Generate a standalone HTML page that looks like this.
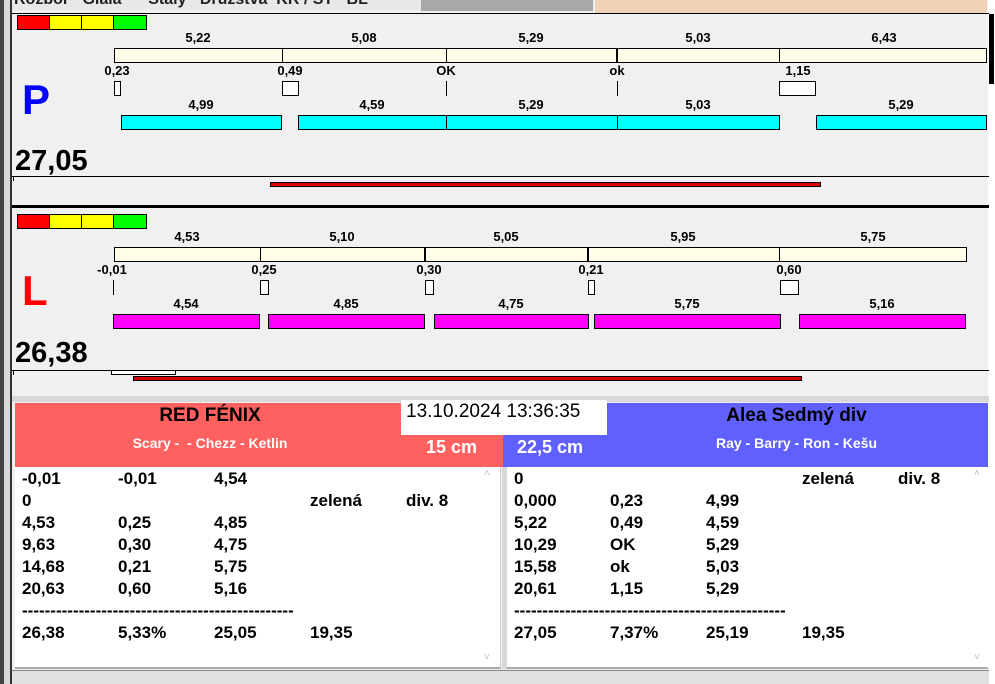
<!DOCTYPE html>
<html><head><meta charset="utf-8"><style>
*{margin:0;padding:0;box-sizing:border-box}
body{width:995px;height:684px;overflow:hidden;background:#f0f0f0;font-family:"Liberation Sans",Arial,sans-serif;position:relative}
.a{position:absolute}
.t{position:absolute;font-weight:bold;font-size:13px;color:#000;white-space:nowrap;transform:translateX(-50%)}
.bx{position:absolute;border:1px solid #000}
.r{position:absolute;font-size:17px;font-weight:bold;white-space:nowrap}
</style></head><body>
<div class="a" style="left:0;top:0;width:4px;height:684px;background:#444"></div>
<div class="a" style="left:4px;top:0;width:6px;height:684px;background:#d8d8d8"></div>
<div class="a" style="left:10px;top:0;width:2px;height:684px;background:#333"></div>
<!-- tabs -->
<div class="a" style="left:12px;top:0;width:410px;height:10px;background:#e8e8e8"></div>
<div class="a" style="left:14px;top:-9px;font-size:16px;font-weight:bold;color:#222">Rozbor&nbsp;&nbsp;&nbsp;Glaia&nbsp;&nbsp;&nbsp;&nbsp;&nbsp;&nbsp;Stály&nbsp;&nbsp;&nbsp;Družstva&nbsp;&nbsp;KR / ST&nbsp;&nbsp;&nbsp;BL</div>
<div class="a" style="left:421px;top:0;width:172px;height:11px;background:#a8a8a8"></div>
<div class="a" style="left:595px;top:0;width:392px;height:13px;background:#efd3b8"></div>
<div class="a" style="left:988px;top:0;width:7px;height:684px;background:#fff"></div>
<div class="a" style="left:989px;top:14px;width:5px;height:70px;background:#000"></div>

<!-- P panel -->
<div class="a" style="left:12px;top:13px;width:977px;height:1px;background:#000"></div>
<div class="bx" style="left:17px;top:15px;width:33px;height:15px;background:#f00"></div>
<div class="bx" style="left:49px;top:15px;width:33px;height:15px;background:#ff0"></div>
<div class="bx" style="left:81px;top:15px;width:33px;height:15px;background:#ff0"></div>
<div class="bx" style="left:113px;top:15px;width:34px;height:15px;background:#0f0"></div>

<div class="bx" style="left:114px;top:48px;width:873px;height:15px;background:#fffde8"></div>
<div class="a" style="left:282px;top:48px;width:1px;height:15px;background:#000"></div>
<div class="a" style="left:446px;top:48px;width:1px;height:15px;background:#000"></div>
<div class="a" style="left:616px;top:48px;width:2px;height:15px;background:#000"></div>
<div class="a" style="left:779px;top:48px;width:1px;height:15px;background:#000"></div>
<div class="t" style="left:198px;top:30px">5,22</div>
<div class="t" style="left:364px;top:30px">5,08</div>
<div class="t" style="left:531px;top:30px">5,29</div>
<div class="t" style="left:698px;top:30px">5,03</div>
<div class="t" style="left:884px;top:30px">6,43</div>
<div class="t" style="left:117px;top:63px">0,23</div>
<div class="t" style="left:290px;top:63px">0,49</div>
<div class="t" style="left:446px;top:63px">OK</div>
<div class="t" style="left:617px;top:63px">ok</div>
<div class="t" style="left:798px;top:63px">1,15</div>
<div class="bx" style="left:114px;top:81px;width:7px;height:15px;background:#fff"></div>
<div class="bx" style="left:282px;top:81px;width:17px;height:15px;background:#fff"></div>
<div class="a" style="left:446px;top:81px;width:1px;height:15px;background:#000"></div>
<div class="a" style="left:617px;top:81px;width:1px;height:15px;background:#000"></div>
<div class="bx" style="left:779px;top:81px;width:37px;height:15px;background:#fff"></div>
<div class="t" style="left:201px;top:97px">4,99</div>
<div class="t" style="left:372px;top:97px">4,59</div>
<div class="t" style="left:531px;top:97px">5,29</div>
<div class="t" style="left:698px;top:97px">5,03</div>
<div class="t" style="left:901px;top:97px">5,29</div>
<div class="bx" style="left:121px;top:115px;width:161px;height:15px;background:#0ff"></div>
<div class="bx" style="left:298px;top:115px;width:149px;height:15px;background:#0ff"></div>
<div class="bx" style="left:446px;top:115px;width:172px;height:15px;background:#0ff"></div>
<div class="bx" style="left:617px;top:115px;width:163px;height:15px;background:#0ff"></div>
<div class="bx" style="left:816px;top:115px;width:171px;height:15px;background:#0ff"></div>
<div class="a" style="left:22px;top:76px;font-size:42px;font-weight:bold;color:#0000ff">P</div>
<div class="a" style="left:15px;top:145px;font-size:29px;font-weight:bold">27,05</div>
<div class="a" style="left:12px;top:176px;width:977px;height:1px;background:#000"></div>
<div class="a" style="left:13px;top:176px;width:1px;height:5px;background:#000"></div>
<div class="bx" style="left:270px;top:182px;width:551px;height:5px;background:#d00"></div>
<div class="a" style="left:12px;top:205px;width:977px;height:3px;background:#000"></div>

<!-- L panel -->
<div class="bx" style="left:17px;top:214px;width:33px;height:15px;background:#f00"></div>
<div class="bx" style="left:49px;top:214px;width:33px;height:15px;background:#ff0"></div>
<div class="bx" style="left:81px;top:214px;width:33px;height:15px;background:#ff0"></div>
<div class="bx" style="left:113px;top:214px;width:34px;height:15px;background:#0f0"></div>
<div class="bx" style="left:114px;top:247px;width:853px;height:15px;background:#fffde8"></div>
<div class="a" style="left:260px;top:247px;width:1px;height:15px;background:#000"></div>
<div class="a" style="left:424px;top:247px;width:2px;height:15px;background:#000"></div>
<div class="a" style="left:587px;top:247px;width:2px;height:15px;background:#000"></div>
<div class="a" style="left:779px;top:247px;width:1px;height:15px;background:#000"></div>
<div class="t" style="left:187px;top:229px">4,53</div>
<div class="t" style="left:342px;top:229px">5,10</div>
<div class="t" style="left:506px;top:229px">5,05</div>
<div class="t" style="left:683px;top:229px">5,95</div>
<div class="t" style="left:873px;top:229px">5,75</div>
<div class="t" style="left:112px;top:262px">-0,01</div>
<div class="t" style="left:264px;top:262px">0,25</div>
<div class="t" style="left:429px;top:262px">0,30</div>
<div class="t" style="left:591px;top:262px">0,21</div>
<div class="t" style="left:789px;top:262px">0,60</div>
<div class="a" style="left:113px;top:280px;width:1px;height:15px;background:#000"></div>
<div class="bx" style="left:260px;top:280px;width:9px;height:15px;background:#fff"></div>
<div class="bx" style="left:425px;top:280px;width:9px;height:15px;background:#fff"></div>
<div class="bx" style="left:588px;top:280px;width:7px;height:15px;background:#fff"></div>
<div class="bx" style="left:780px;top:280px;width:19px;height:15px;background:#fff"></div>
<div class="t" style="left:186px;top:296px">4,54</div>
<div class="t" style="left:346px;top:296px">4,85</div>
<div class="t" style="left:511px;top:296px">4,75</div>
<div class="t" style="left:687px;top:296px">5,75</div>
<div class="t" style="left:882px;top:296px">5,16</div>
<div class="bx" style="left:113px;top:314px;width:147px;height:15px;background:#f0f"></div>
<div class="bx" style="left:268px;top:314px;width:157px;height:15px;background:#f0f"></div>
<div class="bx" style="left:434px;top:314px;width:155px;height:15px;background:#f0f"></div>
<div class="bx" style="left:594px;top:314px;width:187px;height:15px;background:#f0f"></div>
<div class="bx" style="left:799px;top:314px;width:167px;height:15px;background:#f0f"></div>
<div class="a" style="left:22px;top:267px;font-size:42px;font-weight:bold;color:#f00">L</div>
<div class="a" style="left:15px;top:337px;font-size:29px;font-weight:bold">26,38</div>
<div class="a" style="left:12px;top:370px;width:977px;height:1px;background:#000"></div>
<div class="a" style="left:13px;top:370px;width:1px;height:5px;background:#000"></div>
<div class="bx" style="left:111px;top:370px;width:65px;height:5px;background:#fff"></div>
<div class="bx" style="left:133px;top:376px;width:669px;height:5px;background:#d00"></div>
<div class="a" style="left:12px;top:396px;width:977px;height:6px;background:#d8d8d8"></div>

<!-- headers -->
<div class="a" style="left:15px;top:403px;width:488px;height:64px;background:#ff6060"></div>
<div class="a" style="left:503px;top:403px;width:485px;height:64px;background:#6060ff"></div>
<div class="a" style="left:401px;top:400px;width:206px;height:35px;background:#fff"></div>
<div class="a" style="left:406px;top:401px;font-size:19px">13.10.2024 13:36:35</div>
<div class="a" style="left:15px;top:405px;width:390px;text-align:center;font-size:19px;font-weight:bold">RED FÉNIX</div>
<div class="a" style="left:15px;top:435px;width:390px;text-align:center;font-size:14px;font-weight:bold;color:#fff">Scary -&nbsp; - Chezz - Ketlin</div>
<div class="a" style="left:426px;top:437px;font-size:18px;font-weight:bold;color:#fff">15 cm</div>
<div class="a" style="left:517px;top:437px;font-size:18px;font-weight:bold;color:#fff">22,5 cm</div>
<div class="a" style="left:605px;top:405px;width:383px;text-align:center;font-size:19px;font-weight:bold">Alea Sedmý div</div>
<div class="a" style="left:605px;top:435px;width:383px;text-align:center;font-size:14px;font-weight:bold;color:#fff">Ray - Barry - Ron - Kešu</div>

<!-- lists -->
<div class="a" style="left:15px;top:467px;width:486px;height:202px;background:#fff;border-right:1px solid #ccc;border-bottom:2px solid #aaa"></div>
<div class="a" style="left:507px;top:467px;width:481px;height:202px;background:#fff;border-bottom:2px solid #aaa"></div>
<div class="a" style="left:502px;top:467px;width:5px;height:202px;background:#d8d8d8"></div>
<div class="a" style="left:12px;top:670px;width:977px;height:14px;background:#e0e0e0;border-top:1px solid #888"></div>
<div class="a" style="left:484px;top:468px;color:#bbb;font-size:10px">˄</div>
<div class="a" style="left:484px;top:652px;color:#bbb;font-size:10px">˅</div>
<div class="a" style="left:974px;top:468px;color:#bbb;font-size:10px">˄</div>
<div class="a" style="left:974px;top:652px;color:#bbb;font-size:10px">˅</div>

<div class="r" style="left:22px;top:469px">-0,01</div><div class="r" style="left:118px;top:469px">-0,01</div><div class="r" style="left:214px;top:469px">4,54</div>
<div class="r" style="left:22px;top:491px">0</div><div class="r" style="left:310px;top:491px">zelená</div><div class="r" style="left:406px;top:491px">div. 8</div>
<div class="r" style="left:22px;top:513px">4,53</div><div class="r" style="left:118px;top:513px">0,25</div><div class="r" style="left:214px;top:513px">4,85</div>
<div class="r" style="left:22px;top:535px">9,63</div><div class="r" style="left:118px;top:535px">0,30</div><div class="r" style="left:214px;top:535px">4,75</div>
<div class="r" style="left:22px;top:557px">14,68</div><div class="r" style="left:118px;top:557px">0,21</div><div class="r" style="left:214px;top:557px">5,75</div>
<div class="r" style="left:22px;top:579px">20,63</div><div class="r" style="left:118px;top:579px">0,60</div><div class="r" style="left:214px;top:579px">5,16</div>
<div class="r" style="left:22px;top:601px;width:271px;overflow:hidden">-----------------------------------------------------</div>
<div class="r" style="left:22px;top:623px">26,38</div><div class="r" style="left:118px;top:623px">5,33%</div><div class="r" style="left:214px;top:623px">25,05</div><div class="r" style="left:310px;top:623px">19,35</div>

<div class="r" style="left:514px;top:469px">0</div><div class="r" style="left:802px;top:469px">zelená</div><div class="r" style="left:898px;top:469px">div. 8</div>
<div class="r" style="left:514px;top:491px">0,000</div><div class="r" style="left:610px;top:491px">0,23</div><div class="r" style="left:706px;top:491px">4,99</div>
<div class="r" style="left:514px;top:513px">5,22</div><div class="r" style="left:610px;top:513px">0,49</div><div class="r" style="left:706px;top:513px">4,59</div>
<div class="r" style="left:514px;top:535px">10,29</div><div class="r" style="left:610px;top:535px">OK</div><div class="r" style="left:706px;top:535px">5,29</div>
<div class="r" style="left:514px;top:557px">15,58</div><div class="r" style="left:610px;top:557px">ok</div><div class="r" style="left:706px;top:557px">5,03</div>
<div class="r" style="left:514px;top:579px">20,61</div><div class="r" style="left:610px;top:579px">1,15</div><div class="r" style="left:706px;top:579px">5,29</div>
<div class="r" style="left:514px;top:601px;width:271px;overflow:hidden">-----------------------------------------------------</div>
<div class="r" style="left:514px;top:623px">27,05</div><div class="r" style="left:610px;top:623px">7,37%</div><div class="r" style="left:706px;top:623px">25,19</div><div class="r" style="left:802px;top:623px">19,35</div>
</body></html>
